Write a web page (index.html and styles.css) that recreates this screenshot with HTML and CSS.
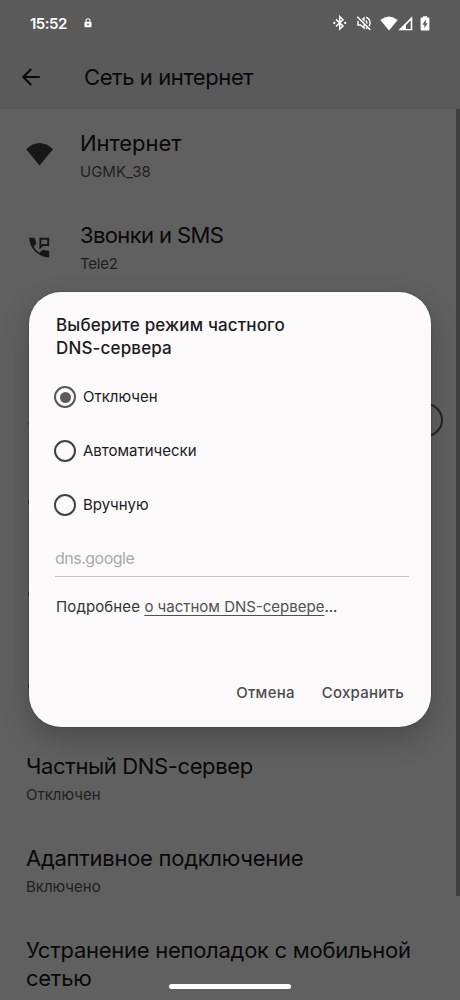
FILE: index.html
```html
<!DOCTYPE html>
<html lang="ru">
<head>
<meta charset="utf-8">
<title>Сеть и интернет</title>
<link rel="stylesheet" href="styles.css">
</head>
<body>
<div class="phone">
  <header class="top">
    <div class="status">
      <span class="clock">15:52</span>
      <svg class="lock" viewBox="0 0 8 10" width="8" height="10"><path d="M2 4V2.8a2 2 0 0 1 4 0V4" fill="none" stroke="#fff" stroke-width="1.1"/><rect x=".5" y="3.7" width="7" height="5.6" rx=".8" fill="#fff"/><circle cx="4" cy="6.4" r=".9" fill="#5a5a5a"/></svg>
      <span class="grow"></span>
      <svg class="bt" viewBox="0 0 14 16" width="14" height="16"><path d="M3 4.4l7 6.6-3.3 3V1.6L10 4.7 3 11.4" fill="none" stroke="#fff" stroke-width="1.5"/><circle cx="1.3" cy="7.9" r="1.1" fill="#fff"/><circle cx="12.2" cy="7.9" r="1.1" fill="#fff"/></svg>
      <svg class="mute" viewBox="0 0 16 16" width="16" height="16"><path d="M2 6v4h2.5L8 13V9.5M6.2 4.6L8 3v3.2M9.7 5.6q1.4 1 1.2 3M10 2.3c4 1 5.2 6 3 8.8M9.8 13.5l1.5-.7" fill="none" stroke="#fff" stroke-width="1.4"/><path d="M1.2 1.8L14.2 14.8" stroke="#fff" stroke-width="1.6"/></svg>
      <svg class="wifi-s" viewBox="0 0 18 15" width="18" height="15"><path d="M.3 4Q9-3 17.7 4L9 14.6z" fill="#fff"/></svg>
      <svg class="signal" viewBox="0 0 15 15" width="15" height="15"><path fill-rule="evenodd" d="M14.3.3v14H.3zM12.7 4.4L8 9v4h4.7z" fill="#fff"/></svg>
      <svg class="battery" viewBox="0 0 10 15" width="10" height="15"><path fill-rule="evenodd" d="M3 .2h4v1.3h1.4q1 0 1 1v11q0 1-1 1H1.6q-1 0-1-1v-11q0-1 1-1H3zM5.8 3.6L2.4 8.7h2v3.5l3.2-5H5.8z" fill="#fff"/></svg>
    </div>
    <div class="appbar">
      <svg class="back" viewBox="0 0 20 20" width="20" height="20"><path d="M18.8 10H2.5M10.2 2L2.3 10l7.9 8" fill="none" stroke="#090909" stroke-width="2"/></svg>
      <h1>Сеть и интернет</h1>
    </div>
  </header>
  <main class="list">
    <div class="row with-icon">
      <svg class="ricon" viewBox="0 0 28 28" width="28" height="28"><path d="M.2 8.3Q13.5-4.4 27 8.3L13.5 24.6z" fill="#171717"/></svg>
      <div><h2 class="t-internet">Интернет</h2><p class="s-net">UGMK_38</p></div>
    </div>
    <div class="row with-icon">
      <svg class="ricon" viewBox="0 0 28 28" width="28" height="28"><path d="M3.3 4.8h5.4l1.6 6-2.8 2.9q2.3 4.2 6 6.1l3.2-3 6.5 1.3v6.3C12.5 24.4 3.1 15 3.3 4.8z" fill="#171717"/><path d="M14.4 5.7h7.8v6.3h-5.5l-2.3 2.3z" fill="none" stroke="#171717" stroke-width="1.9"/></svg>
      <div><h2 class="t-calls">Звонки и SMS</h2><p class="s-tele">Tele2</p></div>
    </div>
    <div class="covered">
      <div class="switch-row"><i class="tick"></i><i class="switch"></i></div>
      <i class="tick"></i><i class="tick"></i><i class="tick"></i>
    </div>
    <div class="row"><h2 class="t-dns">Частный DNS-сервер</h2><p class="s-off">Отключен</p></div>
    <div class="row"><h2 class="t-adapt">Адаптивное подключение</h2><p class="s-on">Включено</p></div>
    <div class="row"><h2 class="t-fix">Устранение неполадок с мобильной<br>сетью</h2></div>
  </main>
  <div class="scrollbar"></div>
  <section class="dialog">
    <h3><span class="d1">Выберите режим частного</span><br><span class="d2">DNS-сервера</span></h3>
    <div class="options">
      <div class="option"><i class="radio on"></i><span class="o1">Отключен</span></div>
      <div class="option"><i class="radio"></i><span class="o2">Автоматически</span></div>
      <div class="option"><i class="radio"></i><span class="o3">Вручную</span></div>
    </div>
    <div class="field">dns.google</div>
    <p class="more"><span>Подробнее </span><u>о частном DNS-сервере</u>...</p>
    <div class="actions"><span class="cancel">Отмена</span><span class="save">Сохранить</span></div>
  </section>
  <div class="homebar"></div>
</div>
</body>
</html>
```
FILE: styles.css
```css
* { box-sizing: border-box; margin: 0; padding: 0; }
body { background: #606060; font-family: Inter, "Noto Sans", sans-serif; }
.phone { position: relative; width: 460px; height: 1000px; overflow: hidden; background: #606060; }
h1, h2 { font-weight: 400; color: #090909; white-space: nowrap; }
svg { display: block; flex: none; }
i { display: block; }

.top { height: 109px; background: #5a5a5a; }
.status { height: 46px; display: flex; align-items: center; padding: 0 30px 0 30px; }
.clock { color: #fff; font-size: 15px; font-weight: 600; letter-spacing: -.5px; width: 54px; }
.grow { flex: 1; }
.mute { margin-left: 9px; }
.wifi-s { margin-left: 8px; }
.signal { margin-left: 0; }
.battery { margin-left: 7px; }
.appbar { height: 62px; display: flex; align-items: center; padding-left: 21px; }
.appbar h1 { margin-left: 43px; font-size: 22px; letter-spacing: -.42px; }

.row { height: 92px; padding: 20px 0 0 26px; }
.row h2 { font-size: 22px; line-height: 28px; letter-spacing: -.3px; }
.row .t-internet { letter-spacing: -.05px; }
.row .t-calls { letter-spacing: -.62px; }
.row .t-dns { letter-spacing: -.38px; }
.row .t-adapt { letter-spacing: -.27px; }
.row .t-fix { letter-spacing: -.27px; }
.row p { margin-top: 6px; font-size: 15px; line-height: 18px; color: #202020; }
.row .s-tele { letter-spacing: -.2px; }
.with-icon { display: flex; gap: 26px; }
.ricon { margin-top: 12px; }
.covered { height: 439px; padding: 103px 17px 0 28px; }
.switch-row { display: flex; align-items: center; justify-content: space-between; height: 48px; }
.switch { width: 60px; height: 34px; border: 2px solid #242424; border-radius: 17px; }
.tick { width: 6px; height: 3px; border-radius: 2px; background: #353535; }
.switch-row .tick { margin-top: 6px; }
.covered > .tick { margin: 55px 0 0; height: 6px; }
.covered > .tick + .tick { margin-top: 86px; }

.scrollbar { position: absolute; right: 0; top: 109px; width: 4px; height: 787px; background: #404040; }
.dialog { position: absolute; left: 29px; top: 292px; width: 402px; height: 435px; border-radius: 32px; background: #fcf9fb; padding: 22px 22px 0 26px; box-shadow: 0 12px 28px rgba(0,0,0,.22), 0 0 2px rgba(0,0,0,.35); white-space: nowrap; }
.dialog h3 { padding-left: 1px; font-size: 17px; line-height: 23px; font-weight: 500; color: #1c1b1c; letter-spacing: .15px; }
.options { margin-top: 10px; }
.option { height: 54px; display: flex; align-items: center; gap: 7px; font-size: 15px; line-height: 18px; color: #1b1b1b; margin-left: -1px; }
.option span { margin-top: -1px; }
.radio { width: 22px; height: 22px; border: 2px solid #414141; border-radius: 50%; }
.radio.on { border-color: #585858; padding: 3.5px; }
.radio.on::before { content: ""; display: block; width: 11px; height: 11px; border-radius: 50%; background: #5b5b5b; }
.field { height: 45px; border-bottom: 1px solid #c3c1c2; font-size: 16px; line-height: 52px; letter-spacing: -.5px; color: #acaaab; }
.more { margin: 19px 0 0 1px; font-size: 15px; line-height: 22px; color: #333; }
.more span { letter-spacing: .12px; }
.more u { color: #505050; text-underline-offset: 3px; text-decoration-thickness: 1px; text-decoration-skip-ink: none; }
.actions { display: flex; justify-content: flex-end; gap: 27px; margin-top: 64px; padding-right: 5px; font-size: 15px; line-height: 22px; font-weight: 500; color: #4b4b4b; letter-spacing: .25px; }
.homebar { position: absolute; left: 169px; top: 984px; width: 122px; height: 5px; border-radius: 3px; background: #fff; }
```
